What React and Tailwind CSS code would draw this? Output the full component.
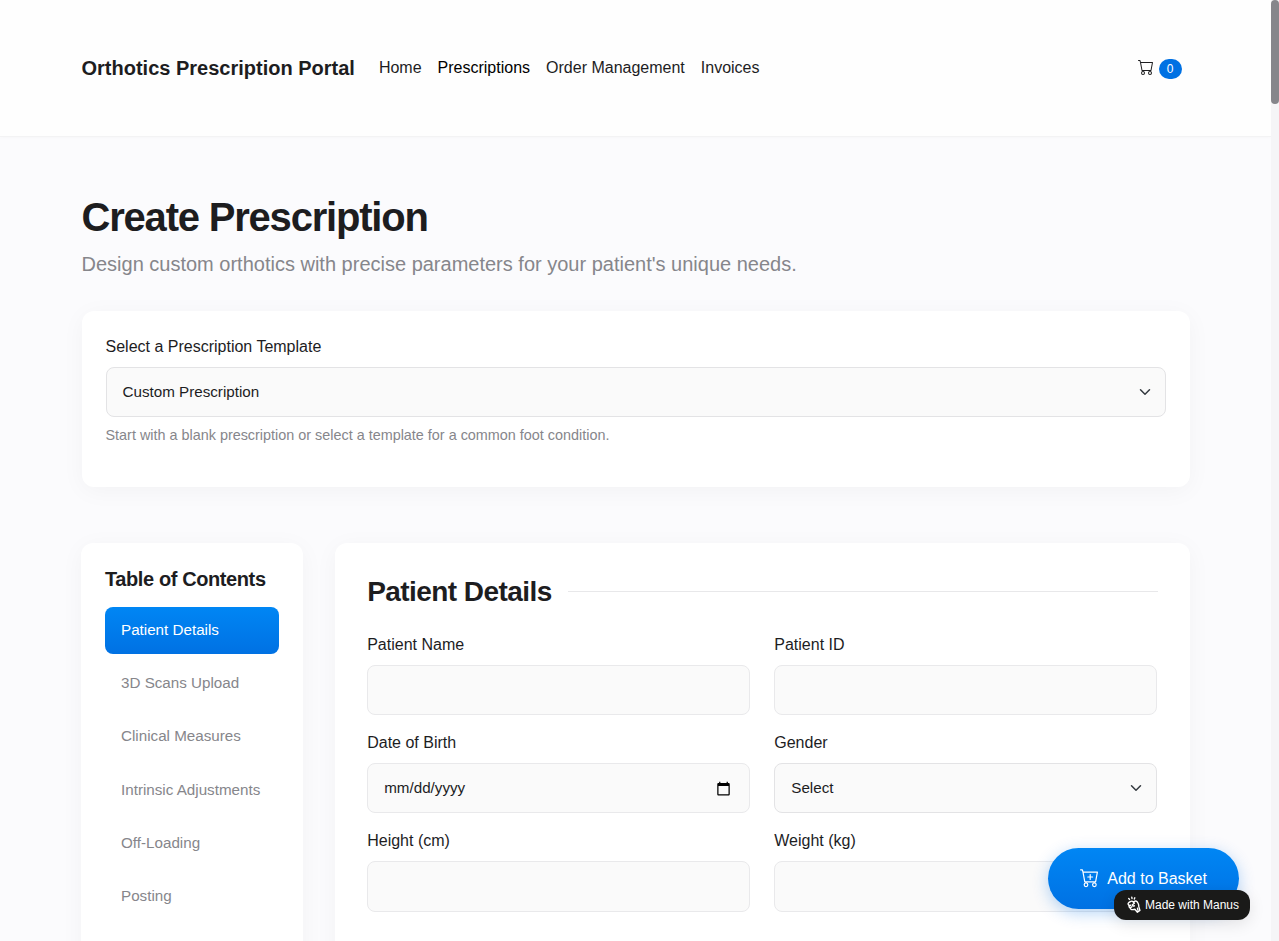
import React from "react";
import { BsCart, BsCartPlus } from "react-icons/bs";

const navLinks = ["Home", "Prescriptions", "Order Management", "Invoices"];

const sections = [
  "Patient Details",
  "3D Scans Upload",
  "Clinical Measures",
  "Intrinsic Adjustments",
  "Off-Loading",
  "Posting",
];

function Chevron() {
  return (
    <svg viewBox="0 0 16 16" className="h-3 w-4 shrink-0" fill="none" stroke="#343a40" strokeWidth="2" strokeLinecap="round" strokeLinejoin="round">
      <path d="m2 5 6 6 6-6" />
    </svg>
  );
}

function CalendarIcon() {
  return (
    <svg viewBox="0 0 24 24" className="h-[15px] w-[15px]" fill="#000">
      <path d="M20 3h-1V1h-2v2H7V1H5v2H4c-1.100 0-2 .9-2 2v16c0 1.100.9 2 2 2h16c1.100 0 2-.9 2-2V5c0-1.100-.9-2-2-2zm0 18H4V8h16v13z" />
    </svg>
  );
}

function HandIcon() {
  return (
    <svg viewBox="0 0 16 18" className="h-[18px] w-4 shrink-0" fill="none" stroke="#fff" strokeWidth="1.400" strokeLinecap="round" strokeLinejoin="round">
      <path d="M3.500 3.400 2.700 2.500M6 2.500 5.800 1.200M8.300 3l.5-1.200" />
      <path d="M7.200 5.800C6.300 4.900 5.200 5 4.300 5.600L2.700 6.700c-.8.700-.8 1.600 0 2.300l.6.500c-.5 1-.1 1.900.9 2.200.1 1.300 1.200 2.100 2.500 1.900l2.200-.3 2.500 2.900 2.500-1.700-1-3.600c-.1-1.900-.4-3.500-1.500-4.800-.8-.8-1.500-1.300-2.400-1L7.200 5.800Z" />
      <path d="m7.200 5.800 1.200 1.400-2 1.600c.2 1 1.100 1.400 2 1M4.800 9.200l-1.500.3M4.200 11.700l1.600-.9M11.500 12.300l.5 2" />
    </svg>
  );
}

function Field({ label, select = false, children }) {
  return (
    <div>
      <div className="text-base leading-6">{label}</div>
      <div
        className={
          select
            ? "mt-2 flex h-[50.400px] items-center justify-between rounded-lg border border-[#e3e3e5] bg-[#fafafa] pl-4 pr-3 text-[15.2px]"
            : "mt-2 flex h-[50.400px] items-center justify-between rounded-lg border border-[#e9e9eb] bg-[#fafafa] pl-4 pr-3 text-[15.2px]"
        }
      >
        {children}
      </div>
    </div>
  );
}

export default function App() {
  return (
    <div className="flex h-[941px] w-[1279px] overflow-hidden bg-[#fbfbfd] font-['Liberation_Sans',Arial,sans-serif] text-[#1d1d1f]">
      <div className="flex h-full w-[1271px] shrink-0 flex-col overflow-hidden">
        <header className="h-[137px] shrink-0 border-b border-[#f3f3f4] bg-[#fefefe] shadow-[0_1px_3px_rgba(0,0,0,0.02)]">
          <div className="mx-auto flex h-[136px] w-[1108px] items-center">
            <div className="text-[20px] font-bold leading-[30px]">Orthotics Prescription Portal</div>
            <nav className="ml-6 flex gap-4 text-base leading-6">
              {navLinks.map((link) => (
                <a key={link} className={link === "Prescriptions" ? "text-black" : ""}>{link}</a>
              ))}
            </nav>
            <div className="ml-auto mr-2 flex items-center gap-[5px]">
              <BsCart className="mb-0.5 h-4 w-4" />
              <span className="mt-0.5 flex h-5 w-[23px] items-center justify-center rounded-full bg-[#0071e3] text-xs text-white">0</span>
            </div>
          </div>
        </header>

        <main className="mx-auto w-[1108px] pt-14">
          <h1 className="text-[40px] font-bold leading-[48px] tracking-[-1.200px]">Create Prescription</h1>
          <p className="mt-2 text-[20px] leading-[30px] text-[#86868b]">
            Design custom orthotics with precise parameters for your patient's unique needs.
          </p>

          <section className="mt-8 h-[176px] rounded-xl bg-white p-6 shadow-[0_4px_24px_rgba(0,0,0,0.04)]">
            <div className="text-base leading-6">Select a Prescription Template</div>
            <div className="mt-2 flex h-[50px] items-center justify-between rounded-lg border border-[#e3e3e5] bg-[#fafafa] pl-4 pr-3 text-[15.2px]">
              <span>Custom Prescription</span>
              <Chevron />
            </div>
            <p className="mt-2 text-[14.4px] leading-[21px] text-[#86868b]">
              Start with a blank prescription or select a template for a common foot condition.
            </p>
          </section>

          <div className="mt-14 flex gap-8">
            <aside className="-ml-[0.500px] h-[600px] w-[222.200px] shrink-0 rounded-xl bg-white p-6 shadow-[0_4px_24px_rgba(0,0,0,0.04)]">
              <h2 className="text-[20px] font-bold leading-6 tracking-[-0.400px]">Table of Contents</h2>
              <ul className="mt-4 flex flex-col gap-[6.400px] text-[15.2px]">
                {sections.map((name, i) => (
                  <li
                    key={name}
                    className={
                      i === 0
                        ? "flex h-[46.800px] items-center rounded-lg bg-linear-to-b from-[#0086f4] to-[#0071e3] px-4 text-white"
                        : "flex h-[46.800px] items-center px-4 text-[#86868b]"
                    }
                  >
                    {name}
                  </li>
                ))}
              </ul>
            </aside>

            <section className="h-[600px] grow rounded-xl bg-white px-8 pt-8 shadow-[0_4px_24px_rgba(0,0,0,0.04)]">
              <div className="flex items-center gap-4">
                <h2 className="text-[28px] font-bold leading-[34px] tracking-[-0.560px]">Patient Details</h2>
                <div className="mb-px h-px grow bg-[#e8e8ea]" />
              </div>
              <div className="mr-[0.150px] mt-6 grid grid-cols-2 gap-x-6 gap-y-[15.700px]">
                <Field label="Patient Name" />
                <Field label="Patient ID" />
                <Field label="Date of Birth">
                  <span>mm/dd/yyyy</span>
                  <span className="mr-[6px]"><CalendarIcon /></span>
                </Field>
                <Field label="Gender" select>
                  <span>Select</span>
                  <Chevron />
                </Field>
                <Field label="Height (cm)" />
                <Field label="Weight (kg)" />
              </div>
            </section>
          </div>
        </main>
      </div>

      <div className="h-full w-2 shrink-0 bg-[#f5f5f7]">
        <div className="h-[104px] w-2 rounded bg-[#86868b]" />
      </div>

      <button className="absolute left-[1048px] top-[848px] z-20 flex h-[61px] w-[191px] items-center justify-center gap-2 rounded-full bg-linear-to-b from-[#0086f4] to-[#0071e3] text-base text-white shadow-[0_4px_16px_rgba(0,113,227,0.3)]">
        <BsCartPlus className="mb-px h-[19.200px] w-[19.200px]" />
        Add to Basket
      </button>
      <div className="absolute left-[1114px] top-[890px] z-30 flex h-[30px] w-[136px] items-center gap-[3px] rounded-xl bg-[#1a1a19] pl-3 text-xs text-white shadow-[0_4px_16px_rgba(0,0,0,0.1)]">
        <HandIcon />
        <span>Made with Manus</span>
      </div>
    </div>
  );
}
